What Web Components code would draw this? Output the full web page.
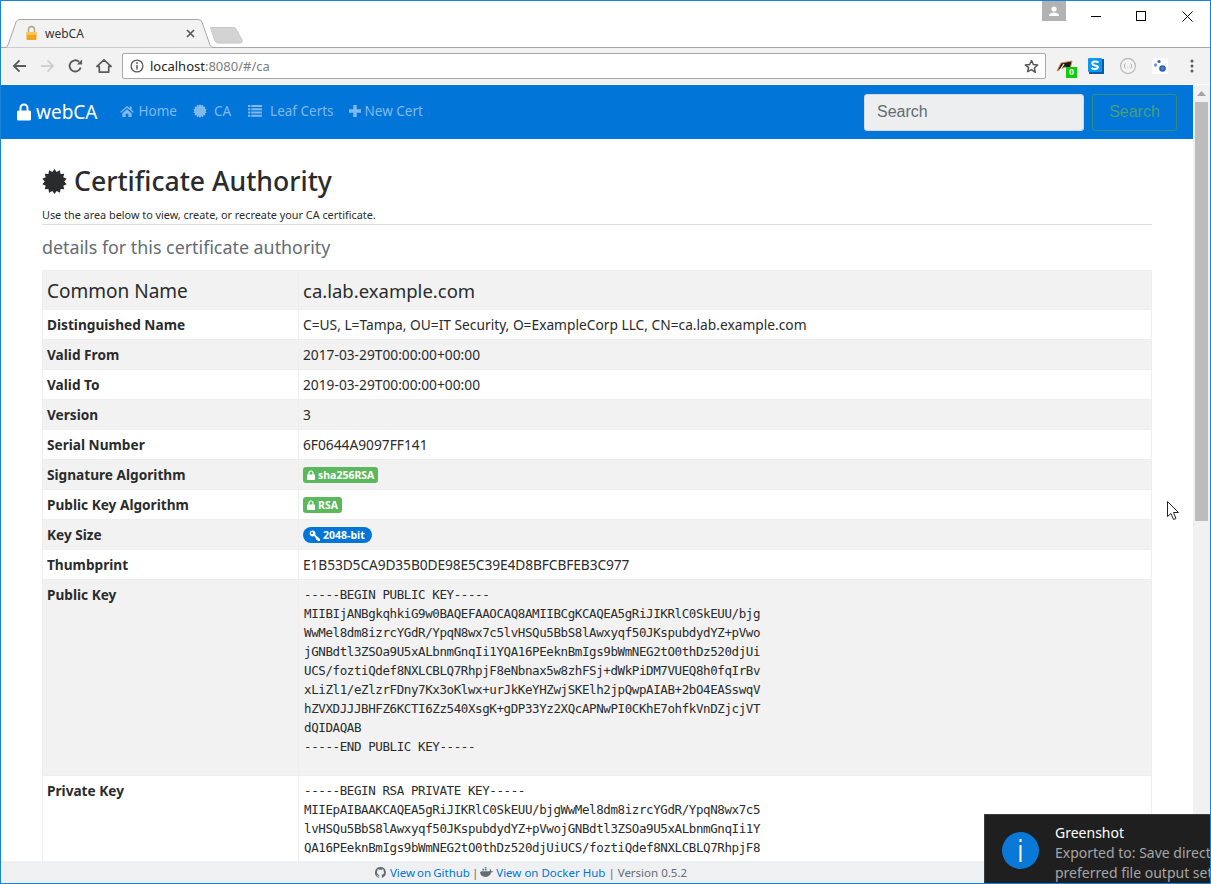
<!DOCTYPE html>
<html><head><meta charset="utf-8"><style>
html,body{margin:0;padding:0;height:100%;overflow:hidden}
body{font-family:"Noto Sans","Open Sans",sans-serif;color:#292b2c}
</style></head><body>
<app-window></app-window>
<template id="t-win"><style>
:host{display:flex;flex-direction:column;width:1211px;height:884px;box-sizing:border-box;border:1px solid #1883d7;position:relative;overflow:hidden;background:#fff}
.view{flex:1;display:flex;min-height:0}
.page{flex:1;display:flex;flex-direction:column;min-width:0}
.scroll{flex:1;min-height:0;overflow:hidden}
browser-toast{position:absolute;right:-1px;bottom:-1px}
desk-cursor{position:absolute;left:1165px;top:499px}
</style>
<browser-tabs></browser-tabs><browser-toolbar></browser-toolbar>
<div class="view"><div class="page"><app-nav></app-nav><div class="scroll"><ca-page></ca-page></div><app-footer></app-footer></div><page-scrollbar></page-scrollbar></div>
<browser-toast></browser-toast><desk-cursor></desk-cursor>
</template>

<template id="t-tabs"><style>
:host{display:flex;height:47px;box-sizing:border-box;position:relative;background:#fff;border-bottom:1px solid #a8a8a8;flex:none}
.tabs{display:flex;align-items:flex-end}
.tab{width:214px;height:29px;position:relative;margin-bottom:-1px;flex:none}
.tab svg.shape{position:absolute;left:0;top:0}
.in{position:absolute;inset:0;display:flex;align-items:center;padding:0 20px 1px 24px;font:12px "Noto Sans",sans-serif;color:#333}
.in span{flex:1;margin-left:7px}
.new{margin:0 0 3px -6px;flex:none}
.ctl{position:absolute;right:0;top:0;display:flex;align-items:flex-start}
.user{width:24px;height:20px;background:#b2b2b2;display:flex;align-items:center;justify-content:center;margin-right:8px}
.b{width:45.500px;height:30px;display:flex;align-items:center;justify-content:center}
</style>
<div class="tabs"><div class="tab">
<svg class="shape" width="214" height="29"><path d="M0 28.500H4Q6 28.500 7 26L15 3Q16 .5 19 .5H197Q200 .5 201 3L209 26Q210 28.500 213 28.500H214" fill="#f2f2f2" stroke="#a8a8a8"/></svg>
<div class="in"><svg width="13" height="16" viewBox="0 0 13 16"><path d="M3.500 7V4.600a3 3 0 0 1 6 0V7" fill="none" stroke="#b9a98a" stroke-width="1.600"/><rect x="1.500" y="7" width="10" height="8" rx="1" fill="#f4a321"/><rect x="1.500" y="7" width="10" height="3" fill="#fbc74e"/></svg><span>webCA</span><svg width="9" height="9" viewBox="0 0 9 9"><path d="M1 1l7 7M8 1l-7 7" stroke="#5a5a5a" stroke-width="1.700"/></svg></div></div>
<svg class="new" width="36" height="18"><path d="M1.500 1.500H24Q26 1.500 27 3L33 14Q34 17 31 17H9Q7 17 6 15Z" fill="#d3d3d3" stroke="#c6c6c6"/></svg></div>
<div class="ctl"><div class="user"><svg width="12" height="10" viewBox="0 0 12 10"><circle cx="6" cy="3" r="2.600" fill="#fff"/><path d="M1 10V8.500Q3 6.500 6 6.500T11 8.500V10Z" fill="#fff"/></svg></div>
<div class="b"><svg width="11" height="11"><path d="M0 5.500H10" stroke="#000"/></svg></div>
<div class="b"><svg width="11" height="11"><rect x=".5" y=".5" width="9" height="9" fill="none" stroke="#000"/></svg></div>
<div class="b"><svg width="11" height="11"><path d="M.5.500l10 10M10.500.500l-10 10" stroke="#000" stroke-width="1"/></svg></div></div>
</template>

<template id="t-tool"><style>
:host{display:flex;align-items:center;height:37px;box-sizing:border-box;background:#f2f2f2;border-bottom:1px solid #fff;flex:none}
.nav{display:flex;align-items:center;gap:13px;padding-left:11px;margin-right:10px}
.nav svg{display:block}
.url{width:924px;height:26px;box-sizing:border-box;background:#fff;border:1px solid #a9a9a9;border-radius:2px;display:flex;align-items:center;padding:0 6px 0 7px;font:13px "Noto Sans",sans-serif;color:#222;flex:none}
.url .t{flex:1;margin-left:6px;white-space:nowrap}.url i{font-style:normal;color:#7d7d7d}
.ext{display:flex;align-items:center;margin-left:10px;gap:16px}
.ext>*{flex:none}
.p{position:relative;width:16px;height:16px}
.p b{position:absolute;left:10px;top:9px;width:11px;height:11px;background:#0cce0c;color:#fff;font:700 9px/11px "Liberation Sans",sans-serif;text-align:center}
</style>
<div class="nav">
<svg width="15" height="16" viewBox="0 0 16 16"><path d="M15 8H2M8 2L2 8l6 6" fill="none" stroke="#5a5a5a" stroke-width="1.900"/></svg>
<svg width="15" height="16" viewBox="0 0 16 16"><path d="M1 8h13M8 2l6 6-6 6" fill="none" stroke="#d0d0d0" stroke-width="1.900"/></svg>
<svg width="15" height="16" viewBox="0 0 16 16"><path d="M13.500 9.500A6 6 0 1 1 11.800 3.500" fill="none" stroke="#5a5a5a" stroke-width="2"/><path d="M9.500 6.500H15V1Z" fill="#5a5a5a"/></svg>
<svg width="16" height="16" viewBox="0 0 17 16"><path d="M8.500 1.500L1 8.500h2.500v6h10v-6H16Z" fill="none" stroke="#5a5a5a" stroke-width="1.800" stroke-linejoin="round"/></svg>
</div>
<div class="url"><svg width="14" height="14" viewBox="0 0 14 14"><circle cx="7" cy="7" r="5.900" fill="none" stroke="#5a5a5a" stroke-width="1.300"/><path d="M7 6v4.500" stroke="#5a5a5a" stroke-width="1.500"/><circle cx="7" cy="4" r=".9" fill="#5a5a5a"/></svg><div class="t">localhost<i>:8080/#/ca</i></div>
<svg width="15" height="15" viewBox="0 0 24 24"><path d="M12 2.500l2.900 6.400 7 .8-5.200 4.700 1.400 6.900L12 17l-6.100 3.300 1.400-6.900L2.100 9.700l7-.8Z" fill="none" stroke="#555" stroke-width="2.400" stroke-linejoin="round"/></svg></div>
<div class="ext">
<div class="p"><svg width="18" height="16" viewBox="0 0 18 16"><path d="M1 12L5 4 16 2 14 10 9 8 5 10Z" fill="#1c1c1c" stroke="#e08a4a" stroke-width="1"/><path d="M4 11l4-6" stroke="#fff" stroke-width="1.200"/></svg><b>0</b></div>
<svg width="16" height="16" viewBox="0 0 16 16"><rect x="1" y="1" width="15" height="15" fill="#0e5aa0"/><rect width="14" height="14" rx="1" fill="#1095f0"/><path d="M10.500 4.500Q9 3.500 7 3.500 4 3.500 4.300 5.500 4.500 7 7 7.500 10 8 10 9.500 9.500 11 7 11 5 11 3.500 10" fill="none" stroke="#fff" stroke-width="2"/></svg>
<svg width="18" height="18" viewBox="0 0 18 18" style="margin:0 -1px"><circle cx="9" cy="9" r="7.500" fill="#f4f4f4" stroke="#bdbdbd" stroke-width="1.300"/><path d="M6.500 6.500Q5.500 7 5.500 9T6.500 11.500M11.500 6.500Q12.500 7 12.500 9T11.500 11.500M8 10h.5M9.800 10h.5" fill="none" stroke="#b0b0b0"/></svg>
<svg width="16" height="16" viewBox="0 0 16 16"><rect width="16" height="16" fill="#fff"/><circle cx="7" cy="3.500" r="1.600" fill="#3a66b5"/><circle cx="3.500" cy="7" r="1.700" fill="#6b9ad8"/><circle cx="10.500" cy="10.500" r="3.300" fill="#2f62b5"/><circle cx="10.500" cy="10.500" r="1.300" fill="#5f8fd6"/></svg>
<svg style="margin-left:6px" width="4" height="14" viewBox="0 0 4 14"><circle cx="2" cy="2" r="1.500" fill="#5a5a5a"/><circle cx="2" cy="7" r="1.500" fill="#5a5a5a"/><circle cx="2" cy="12" r="1.500" fill="#5a5a5a"/></svg>
</div>
</template>

<template id="t-burst"><style>:host{display:block;flex:none}svg{display:block}</style><svg></svg></template>

<template id="t-nav"><style>
:host{display:flex;align-items:center;height:54px;box-sizing:border-box;background:#0275d8;padding:0 16px;flex:none}
.brand{display:flex;align-items:center;gap:5px;color:#fff;font-size:19px;margin-right:23px}
.links{display:flex;align-items:center;gap:16px;flex:1;font-size:13.500px;color:#80baec;padding-bottom:3px}
.links a{display:flex;align-items:center;gap:4px}
input{width:220px;height:37px;box-sizing:border-box;border:1px solid #d5d9de;border-radius:3px;background:#eceef0;padding:0 12px;font:16px "Liberation Sans",sans-serif;color:#636c72}
input::placeholder{color:#636c72;opacity:1}
button{width:85px;height:37px;margin-left:8px;box-sizing:border-box;background:transparent;border:1px solid #2e9180;border-radius:3px;color:#44a07c;font:16px "Liberation Sans",sans-serif;padding:0}
svg{display:block;fill:currentColor}
</style>
<div class="brand"><svg width="14" height="18" viewBox="0 0 14 18"><path d="M3.500 8V5a3.500 3.500 0 0 1 7 0v3" fill="none" stroke="#fff" stroke-width="2"/><rect x="0" y="7.500" width="14" height="10" rx="1.500"/></svg>webCA</div>
<div class="links">
<a><svg width="14" height="12" viewBox="0 0 15 13"><path d="M7.500 1L0 7.500l1 1L7.500 3l6.500 5.500 1-1L12.500 5.300V1.500h-2v2ZM2.500 9L7.500 4.500 12.500 9v4H9V9.500H6V13H2.500Z"/></svg>Home</a>
<a style="gap:7px"><burst-icon size="14" color="#80baec"></burst-icon>CA</a>
<a style="gap:8px;margin-left:1px"><svg width="14" height="12" viewBox="0 0 15 13"><path d="M0 0h2.500v2.300H0ZM3.500 0H15v2.300H3.500ZM0 3.500h2.500v2.300H0ZM3.500 3.500H15v2.300H3.500ZM0 7h2.500v2.300H0ZM3.500 7H15v2.300H3.500ZM0 10.500h2.500v2.300H0ZM3.500 10.500H15v2.300H3.500Z"/></svg>Leaf Certs</a>
<a style="margin-left:-1px"><svg width="12" height="12" viewBox="0 0 12 12"><path d="M4.300 0h3.400v4.300H12v3.400H7.700V12H4.300V7.700H0V4.300h4.300Z"/></svg>New Cert</a>
</div>
<input placeholder="Search"><button>Search</button>
</template>

<template id="t-page"><style>
:host{display:block;padding:24px 41px 0 41px;height:100%;box-sizing:border-box}
h1{display:flex;align-items:center;gap:7px;margin:0;font-size:26.600px;font-weight:500;line-height:37px;height:37px;color:#292b2c}
p{margin:8px 0 0;font-size:10.850px;line-height:13px;height:16px;border-bottom:1px solid #ddd;color:#292b2c}
h2{margin:7px 0 0;font-size:17.850px;font-weight:400;line-height:30px;color:#636c72}
.t{margin-top:8px;width:1110px;border:1px solid #eceeef;border-width:1px 1px 0;box-sizing:border-box}
.fp{letter-spacing:-.1px}
</style>
<h1><burst-icon size="25" color="#292b2c"></burst-icon>Certificate Authority</h1>
<p>Use the area below to view, create, or recreate your CA certificate.</p>
<h2>details for this certificate authority</h2>
<div class="t">
<ca-row big shade><span slot="k">Common Name</span>ca.lab.example.com</ca-row>
<ca-row><span slot="k">Distinguished Name</span>C=US, L=Tampa, OU=IT Security, O=ExampleCorp LLC, CN=ca.lab.example.com</ca-row>
<ca-row shade><span slot="k">Valid From</span>2017-03-29T00:00:00+00:00</ca-row>
<ca-row><span slot="k">Valid To</span>2019-03-29T00:00:00+00:00</ca-row>
<ca-row shade><span slot="k">Version</span>3</ca-row>
<ca-row><span slot="k">Serial Number</span>6F0644A9097FF141</ca-row>
<ca-row shade><span slot="k">Signature Algorithm</span><ca-badge kind="lock">sha256RSA</ca-badge></ca-row>
<ca-row><span slot="k">Public Key Algorithm</span><ca-badge kind="lock">RSA</ca-badge></ca-row>
<ca-row shade><span slot="k">Key Size</span><ca-badge kind="key">2048-bit</ca-badge></ca-row>
<ca-row><span slot="k">Thumbprint</span><span class="fp">E1B53D5CA9D35B0DE98E5C39E4D8BFCBFEB3C977</span></ca-row>
<ca-row shade style="height:196px"><span slot="k">Public Key</span><ca-pem>-----BEGIN PUBLIC KEY-----
MIIBIjANBgkqhkiG9w0BAQEFAAOCAQ8AMIIBCgKCAQEA5gRiJIKRlC0SkEUU/bjg
WwMel8dm8izrcYGdR/YpqN8wx7c5lvHSQu5BbS8lAwxyqf50JKspubdydYZ+pVwo
jGNBdtl3ZSOa9U5xALbnmGnqIi1YQA16PEeknBmIgs9bWmNEG2tO0thDz520djUi
UCS/foztiQdef8NXLCBLQ7RhpjF8eNbnax5w8zhFSj+dWkPiDM7VUEQ8h0fqIrBv
xLiZl1/eZlzrFDny7Kx3oKlwx+urJkKeYHZwjSKElh2jpQwpAIAB+2bO4EASswqV
hZVXDJJJBHFZ6KCTI6Zz540XsgK+gDP33Yz2XQcAPNwPI0CKhE7ohfkVnDZjcjVT
dQIDAQAB
-----END PUBLIC KEY-----</ca-pem></ca-row>
<ca-row style="height:300px"><span slot="k">Private Key</span><ca-pem>-----BEGIN RSA PRIVATE KEY-----
MIIEpAIBAAKCAQEA5gRiJIKRlC0SkEUU/bjgWwMel8dm8izrcYGdR/YpqN8wx7c5
lvHSQu5BbS8lAwxyqf50JKspubdydYZ+pVwojGNBdtl3ZSOa9U5xALbnmGnqIi1Y
QA16PEeknBmIgs9bWmNEG2tO0thDz520djUiUCS/foztiQdef8NXLCBLQ7RhpjF8</ca-pem></ca-row>
</div>
</template>

<template id="t-row"><style>
:host{display:grid;grid-template-columns:256px 1fr;height:30px;box-sizing:border-box;border-bottom:1px solid #eceeef;font-size:13.750px;line-height:18px;color:#292b2c}
:host([shade]){background:#f2f2f2}
:host([big]){height:39px;font-size:18.500px;line-height:28px}
.k{padding:6px 4px 0;font-weight:700;font-size:13.650px;border-right:1px solid #eceeef}
.v{padding:6px 4px 0 4px;min-width:0}
:host([big]) .k{font-weight:400;font-size:19px}
</style><div class="k"><slot name="k"></slot></div><div class="v"><slot></slot></div></template>

<template id="t-badge"><style>
:host{display:inline-flex;align-items:center;gap:3px;height:16px;margin-top:1px;box-sizing:border-box;padding:0 4px;border-radius:3px;background:#5cb85c;color:#fff;font-size:10.500px;font-weight:700;line-height:16px;vertical-align:top}
:host([kind=key]){background:#0275d8;border-radius:8px;padding:0 7px 0 6px}
svg{display:block;fill:#fff}
</style><span id="i"></span><slot></slot></template>

<template id="t-pem"><style>
:host{display:block;white-space:pre;font:12.500px/19px "DejaVu Sans Mono",monospace;letter-spacing:-.4px;color:#292b2c;margin:-1px 0 0 1px}
</style><slot></slot></template>

<template id="t-foot"><style>
:host{display:flex;justify-content:center;align-items:center;height:22px;background:#eef0f1;font-size:11.500px;color:#636c72;flex:none;white-space:pre;padding-right:132px}
a{color:#0275d8}
.s1{margin-left:4px;word-spacing:-1px}
svg{fill:#636c72;display:block}
</style><svg width="11" height="11" viewBox="0 0 16 16"><path d="M8 0a8 8 0 0 0-2.500 15.600c.4.100.5-.2.500-.4v-1.400c-2.200.5-2.700-1-2.700-1-.4-.9-.9-1.200-.9-1.200-.7-.5.100-.5.100-.5.800.100 1.200.8 1.200.8.700 1.200 1.900.9 2.300.7.100-.5.300-.9.500-1.100-1.800-.2-3.600-.9-3.600-4 0-.9.300-1.600.8-2.100-.1-.2-.4-1 .1-2.100 0 0 .7-.2 2.200.8a7.600 7.600 0 0 1 4 0c1.500-1 2.200-.8 2.200-.8.400 1.100.2 1.900.1 2.100.5.600.8 1.300.8 2.100 0 3.100-1.900 3.700-3.700 3.900.3.300.6.800.6 1.500v2.200c0 .2.100.5.600.4A8 8 0 0 0 8 0Z"/></svg><span class="s1"><a>View on Github</a> | </span><svg width="13" height="10" viewBox="0 0 16 12"><path d="M2 5h10v-3l1 1 1 2h2c-.5 1.500-2 1.500-2.500 1.500C13 10 10 12 6.500 12 3 12 .5 10 0 6Z M3 2h2v2H3ZM6 2h2v2H6ZM6 0h2v1.500H6Z"/></svg><span><a> View on Docker Hub</a> | Version 0.5.2</span></template>

<template id="t-bar"><style>
:host{display:flex;flex-direction:column;width:17px;background:#f1f1f1;flex:none}
.a{height:17px;display:flex;align-items:center;justify-content:center}
.th{height:419px;background:#bcbcbc;margin:0 2px}
</style><div class="a"><svg width="9" height="5"><path d="M4.500 0L9 5H0Z" fill="#a3a3a3"/></svg></div><div class="th"></div></template>

<template id="t-toast"><style>
:host{display:flex;width:227px;height:70px;box-sizing:border-box;background:#1f1f1f;border:1px solid #3c3c3c;border-width:1px 0 0 1px;font:14px/20px "Noto Sans",sans-serif;color:#a6a6a6;overflow:hidden}
.ic{width:37px;height:37px;border-radius:50%;background:#0a78d7;margin:17px 16px 0 17px;flex:none;display:flex;align-items:center;justify-content:center}
.tx{padding-top:8px;white-space:nowrap}
b{display:block;font-weight:400;color:#fff}
</style><div class="ic"><svg width="5" height="24" viewBox="0 0 5 24"><rect x="1.500" y="0" width="2" height="3" fill="#fff"/><rect x="1.500" y="6" width="2" height="17" fill="#fff"/></svg></div>
<div class="tx"><b>Greenshot</b>Exported to: Save direct<br>preferred file output set</div></template>

<template id="t-cur"><style>:host{display:block}svg{display:block}</style><svg width="14" height="21" viewBox="0 0 14 21"><path d="M1.500 1.500V16.500L5 13.500 7.500 19.500 10 18.500 7.500 12.500H12.500Z" fill="#fff" stroke="#222"/></svg></template>

<script>
function def(name,tid,extra){customElements.define(name,class extends HTMLElement{constructor(){super();const r=this.attachShadow({mode:'open'});r.appendChild(document.getElementById(tid).content.cloneNode(true));if(extra)this._x=()=>extra(r,this)}connectedCallback(){if(this._x)this._x()}})}
const lock='<svg width="8" height="10" viewBox="0 0 8 10"><path d="M2 5V3a2 2 0 0 1 4 0v2" fill="none" stroke="#fff" stroke-width="1.200"/><rect y="4.500" width="8" height="5.500" rx=".8"/></svg>';
const key='<svg width="11" height="11" viewBox="0 0 11 11"><path d="M3.500 0.500a3 3 0 1 1-1 5.800a3 3 0 0 1 1-5.800ZM3 2a1 1 0 1 0 .01 0Z" fill-rule="evenodd"/><path d="M5 5.500l1-1 5 4.500v2H9L8 9.800 7 9.500 7 8.500Z"/></svg>';
['t-win:app-window','t-tabs:browser-tabs','t-tool:browser-toolbar','t-nav:app-nav','t-page:ca-page','t-row:ca-row','t-pem:ca-pem','t-foot:app-footer','t-bar:page-scrollbar','t-toast:browser-toast','t-cur:desk-cursor'].forEach(s=>{const[a,b]=s.split(':');def(b,a)});
def('ca-badge','t-badge',(r,h)=>{const i=r.getElementById('i');i.style.display='block';i.innerHTML=h.getAttribute('kind')==='key'?key:lock});
def('burst-icon','t-burst',(r,h)=>{const s=+h.getAttribute('size'),c=s/2,n=14,pts=[];for(let k=0;k<n*2;k++){const a=k*Math.PI/n,R=k%2?c*.78:c;pts.push((c+R*Math.sin(a)).toFixed(2)+','+(c-R*Math.cos(a)).toFixed(2))}
const v=r.querySelector('svg');v.setAttribute('width',s);v.setAttribute('height',s);v.innerHTML='<polygon points="'+pts.join(' ')+'" fill="'+h.getAttribute('color')+'"/>'});
</script>
</body></html>
